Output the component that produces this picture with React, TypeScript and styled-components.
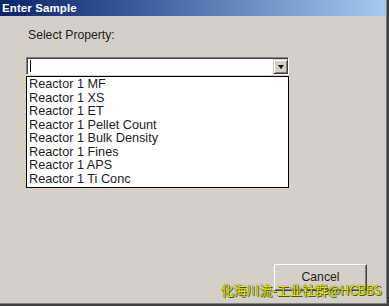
import React from "react";
import styled, { createGlobalStyle } from "styled-components";

const GlobalStyle = createGlobalStyle`
  html, body {
    margin: 0;
    padding: 0;
    background: #d4d0c8;
  }
`;

const Window = styled.div`
  position: relative;
  width: 389px;
  height: 306px;
  box-sizing: border-box;
  display: flex;
  flex-direction: column;
  background: #d4d0c8;
  border-right: 2px solid #404040;
  border-bottom: 2px solid #404040;
  box-shadow: inset -1px -1px 0 #808080;
  font-family: "Liberation Sans", Arial, sans-serif;
  color: #1c1c1c;
  overflow: hidden;
`;

const TitleBar = styled.div`
  height: 16px;
  display: flex;
  align-items: center;
  padding-left: 2px;
  margin-right: 1px;
  background: linear-gradient(to right, #0a246a 0%, #3a5a9c 35%, #a6caf0 100%);
  color: #fff;
  font-weight: bold;
  font-size: 11.5px;
  letter-spacing: 0.1px;
`;

const Body = styled.div`
  flex: 1;
  display: flex;
  flex-direction: column;
  padding: 0 20px 13px 26px;
`;

const Label = styled.div`
  margin: 12px 0 0 2px;
  font-size: 12.2px;
  line-height: 14px;
`;

const Combo = styled.div`
  margin-top: 15px;
  width: 263px;
  height: 18px;
  box-sizing: border-box;
  display: flex;
  align-items: stretch;
  background: #fff;
  border-top: 1px solid #808080;
  border-left: 1px solid #808080;
  border-right: 1px solid #ffffff;
  border-bottom: 1px solid #ffffff;
  box-shadow: inset 1px 1px 0 #404040;
`;

const Caret = styled.div`
  width: 1px;
  margin: 2px 0 2px 3px;
  background: #000;
`;

const DropButton = styled.div`
  margin: 1px 0 0 auto;
  width: 15px;
  box-sizing: border-box;
  display: flex;
  align-items: center;
  justify-content: center;
  background: #d4d0c8;
  border-top: 1px solid #d4d0c8;
  border-left: 1px solid #d4d0c8;
  border-right: 1px solid #404040;
  border-bottom: 1px solid #404040;
  box-shadow: inset 1px 1px 0 #ffffff, inset -1px -1px 0 #808080;
`;

const Arrow = styled.div`
  width: 0;
  height: 0;
  border-left: 3.5px solid transparent;
  border-right: 3.5px solid transparent;
  border-top: 4px solid #000;
`;

const List = styled.div`
  margin-top: 1px;
  width: 263px;
  box-sizing: border-box;
  background: #fff;
  border: 1px solid #000;
  padding: 1px 0 1px 2px;
`;

const Item = styled.div`
  font-size: 12.7px;
  line-height: 13.5px;
  white-space: nowrap;
`;

const ButtonRow = styled.div`
  margin-top: auto;
  display: flex;
  justify-content: flex-end;
`;

const Button = styled.div`
  width: 93px;
  height: 27px;
  box-sizing: border-box;
  display: flex;
  justify-content: center;
  padding-top: 5px;
  font-size: 12.2px;
  border-top: 1px solid #ffffff;
  border-left: 1px solid #ffffff;
  border-right: 1px solid #404040;
  border-bottom: 1px solid #404040;
  box-shadow: inset -1px -1px 0 #808080;
`;

const Watermark = styled.div`
  position: absolute;
  left: 221px;
  top: 282px;
  font-family: "Noto Sans CJK SC", "Liberation Sans", sans-serif;
  font-size: 12.8px;
  line-height: 16px;
  color: #dfe400;
  text-shadow: 0 0 1px #3a3a00, 1px 1px 0 #5a5a10;
  white-space: nowrap;
`;

const items = [
  "Reactor 1 MF",
  "Reactor 1 XS",
  "Reactor 1 ET",
  "Reactor 1 Pellet Count",
  "Reactor 1 Bulk Density",
  "Reactor 1 Fines",
  "Reactor 1 APS",
  "Reactor 1 Ti Conc",
];

const App: React.FC = () => {
  return (
    <>
      <GlobalStyle />
      <Window>
        <TitleBar>Enter Sample</TitleBar>
        <Body>
          <Label>Select Property:</Label>
          <Combo>
            <Caret />
            <DropButton>
              <Arrow />
            </DropButton>
          </Combo>
          <List>
            {items.map((it) => (
              <Item key={it}>{it}</Item>
            ))}
          </List>
          <ButtonRow>
            <Button>Cancel</Button>
          </ButtonRow>
        </Body>
        <Watermark>化海川流-工业社群@HCBBS</Watermark>
      </Window>
    </>
  );
};

export default App;
